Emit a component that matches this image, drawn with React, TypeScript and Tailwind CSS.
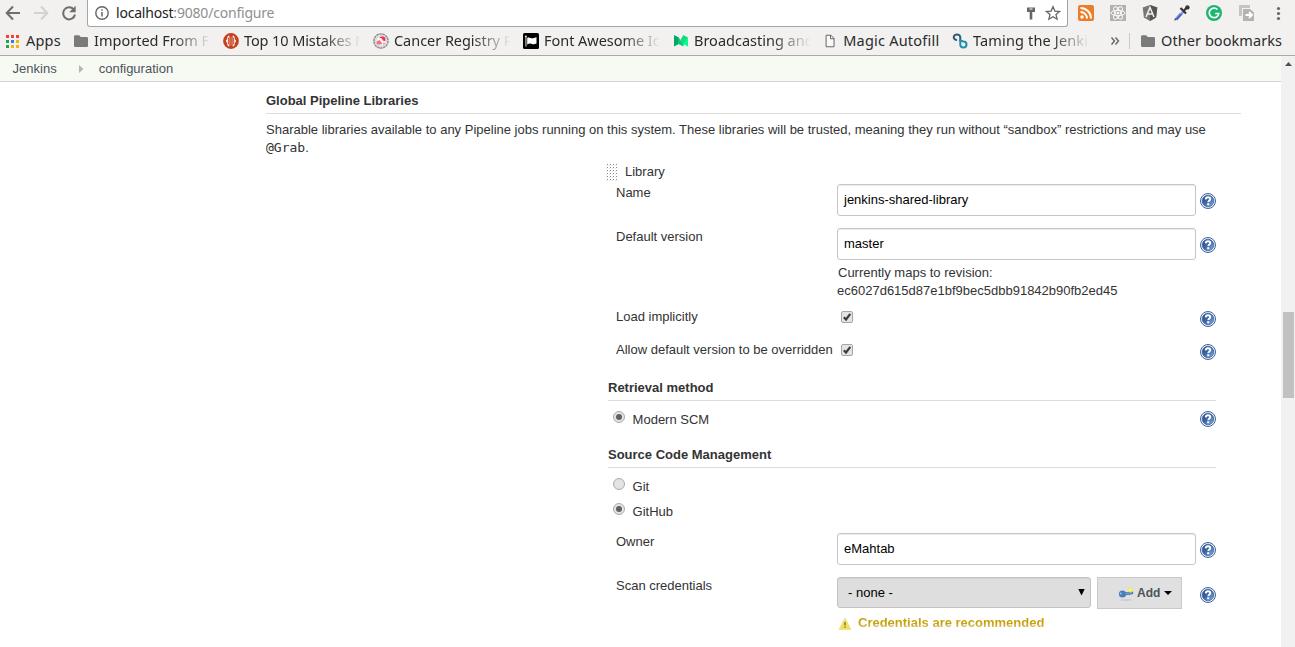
import type { ReactNode } from "react";

function HelpIcon() {
  return (
    <svg width="16" height="16" viewBox="0 0 16 16" className="block shrink-0">
      <defs>
        <linearGradient id="helpFill" x1="0" y1="0" x2="1" y2="1">
          <stop offset="0" stopColor="#1f4a8c" />
          <stop offset="0.45" stopColor="#3a64a2" />
          <stop offset="1" stopColor="#8fb2dc" />
        </linearGradient>
      </defs>
      <circle cx="8" cy="8" r="7.5" fill="#f4f7fb" stroke="#3c639f" strokeWidth="1" />
      <circle cx="8" cy="8" r="5.800" fill="url(#helpFill)" stroke="#34609f" strokeWidth="0.700" />
      <path d="M5.700 6.400C5.800 4.700 6.800 4.200 8 4.200c1.500 0 2.300.7 2.300 1.700 0 1.500-2 1.600-2 3.200" fill="none" stroke="#fff" strokeWidth="1.900" />
      <rect x="7.200" y="10.200" width="2" height="2" fill="#fff" />
    </svg>
  );
}

function Folder() {
  return (
    <svg width="16" height="16" viewBox="0 0 16 16" className="block">
      <path d="M1 3.500a1.200 1.200 0 0 1 1.200-1.200h4l1.500 1.700h6a1.300 1.300 0 0 1 1.300 1.300v7.400a1.300 1.300 0 0 1-1.300 1.300H2.200A1.200 1.200 0 0 1 1 12.800z" fill="#7b7b7b" />
    </svg>
  );
}

function Mistakes() {
  return (
    <svg width="16" height="16" viewBox="0 0 16 16" className="block">
      <circle cx="8" cy="8" r="7.900" fill="#c5401c" />
      <path d="M6.300 2.500C3.600 2.800 4.700 6.500 2.800 8c1.900 1.500.8 5.200 3.500 5.500zM9.700 2.500c2.700.3 1.600 4 3.500 5.500-1.900 1.500-.8 5.200-3.500 5.500z" fill="#fff" />
      <path d="M5.300 4.500v7M10.700 4.500v7" stroke="#c5401c" strokeWidth="1" />
      <path d="M8 3.500v9" stroke="#e5a08c" strokeWidth="0.800" />
    </svg>
  );
}

function Registry() {
  return (
    <svg width="16" height="16" viewBox="0 0 16 16" className="block">
      <circle cx="8" cy="8" r="7" fill="#fafafa" stroke="#909090" strokeWidth="1.600" strokeDasharray="2.600 0.500" />
      <circle cx="8" cy="8" r="5.300" fill="#f5f5f5" stroke="#b9b9b9" strokeWidth="0.700" />
      <path d="M6 4.500L9 3.200l3.300 1.300v3.700L9.800 7.500 9 5.500z" fill="#fa2f50" />
      <path d="M3.500 8.500l3-1.500L8 9l1.500 1.500-2 1H4z" fill="#f96f82" />
      <path d="M10 9.500l2.500.7-2 2z" fill="#b0b0b0" />
    </svg>
  );
}

function FlagTile() {
  return (
    <svg width="16" height="16" viewBox="0 0 16 16" className="block">
      <rect width="16" height="16" rx="1.500" fill="#000" />
      <circle cx="2.900" cy="3.300" r="0.900" fill="#fff" />
      <path d="M2.500 3.500h0.900v10h-0.900z" fill="#fff" />
      <path d="M4.200 4.900c2.500-1.300 3.800.9 6 .4 1.300-.3 2-.8 3.300-1v6.200c-2.500 1.300-3.500.7-5.300.2-1.500-.4-2.700 0-4 .9z" fill="#fff" />
    </svg>
  );
}

function MediumLogo() {
  return (
    <svg width="16" height="16" viewBox="0 0 16 16" className="block">
      <path d="M1 2l4.800 2.500V11L1 13.500z" fill="#00a768" />
      <path d="M5.500 4.300L8 8l2.500 3.800v1.700L5.500 11z" fill="#00c878" />
      <path d="M7.300 7.300L10.300 2 15 4.500 10.500 12z" fill="#12dc80" />
      <path d="M15 4.500v9l-4.700-2.500z" fill="#00ff8c" />
    </svg>
  );
}

function PageIcon() {
  return (
    <svg width="16" height="16" viewBox="0 0 16 16" className="block">
      <path d="M3.500 1.500h5.500l3.500 3.500v9.500h-9z" fill="#f8f8f8" stroke="#555" />
      <path d="M8.500 1.500v4h4" fill="none" stroke="#555" />
    </svg>
  );
}

function LoopLogo() {
  return (
    <svg width="16" height="16" viewBox="0 0 16 16" className="block">
      <path d="M8.300 7.200V4A3.300 2.800 0 1 0 5 6.800" fill="none" stroke="#355a74" strokeWidth="2" transform="translate(0 0.200)" />
      <path d="M8.300 6.500V11.500a3.100 3 0 1 0 3.100-3L7 7.200" fill="none" stroke="#2090b0" strokeWidth="2" />
    </svg>
  );
}

type BookmarkItem = { text: string; icon: ReactNode; cell: string; label: string; fade: boolean };

const fadeMask = "[mask-image:linear-gradient(to_right,black_78px,transparent_117px)]";

const bookmarks: BookmarkItem[] = [
  { text: "Imported From Fi", icon: <Folder />, cell: "w-[150px]", label: "tracking-[0px]", fade: true },
  { text: "Top 10 Mistakes N", icon: <Mistakes />, cell: "w-[150px]", label: "tracking-[-0.1px]", fade: true },
  { text: "Cancer Registry P", icon: <Registry />, cell: "w-[150px]", label: "tracking-[-0.04px]", fade: true },
  { text: "Font Awesome Ic", icon: <FlagTile />, cell: "w-[150px]", label: "tracking-[-0.04px]", fade: true },
  { text: "Broadcasting and", icon: <MediumLogo />, cell: "w-[150px]", label: "tracking-[0px]", fade: true },
  { text: "Magic Autofill", icon: <PageIcon />, cell: "w-[129px]", label: "tracking-[0.22px] pl-px", fade: false },
  { text: "Taming the Jenki", icon: <LoopLogo />, cell: "w-[150px]", label: "tracking-[0.15px]", fade: true },
];

const appDots = ["#f44336", "#f44336", "#f44336", "#2b9e4f", "#2b7de9", "#f2b50f", "#2b9e4f", "#f2b50f", "#f2b50f"];

function Browser() {
  return (
    <header className="h-[56px] border-b border-[#a9a9a9] bg-[#f2f1f0] font-['Noto_Sans',sans-serif] text-[14.5px] text-[#2b2b2b]">
      <div className="flex h-[27px]">
        <svg width="87" height="27" viewBox="0 0 87 27" className="shrink-0" fill="none" strokeWidth="2">
          <path d="M20 13H7M13 6.500L6.700 13l6.300 6.500" stroke="#6e6e6e" />
          <path d="M34 13h13M41 6.500l6.300 6.500-6.300 6.500" stroke="#d2d1d0" />
          <path d="M73.700 9.500A6 6 0 1 0 75 14.500" stroke="#6e6e6e" />
          <path d="M75.700 5.700v6.500h-6.500z" fill="#6e6e6e" />
        </svg>
        <div className="flex h-[27px] w-[981px] items-center rounded-b-[3px] border-x border-b border-[#a5a5a5] bg-white">
          <svg width="14" height="14" viewBox="0 0 14 14" className="ml-[7px] shrink-0">
            <circle cx="7" cy="7" r="6.200" fill="none" stroke="#666" strokeWidth="1.400" />
            <path d="M7 6v4.500M7 3.300v1.500" stroke="#666" strokeWidth="1.500" />
          </svg>
          <div className="ml-[7px] flex-1 whitespace-nowrap text-[14px] leading-[20px] tracking-[-0.2px] text-[#8f8f8f]">
            <span className="text-[#222]">localhost</span>:9080/configure
          </div>
          <svg width="44" height="26" viewBox="0 0 44 26" className="shrink-0">
            <path d="M4 7.500h8v4.500H9.300v7.500H6.700V12H4z" fill="#666" />
            <rect x="6.500" y="8.500" width="3" height="1" fill="#fff" />
            <path d="M30 6.700l1.900 4.400 4.700.4-3.600 3.100 1.100 4.600-4.100-2.500-4.100 2.500 1.100-4.600-3.600-3.100 4.700-.4z" fill="none" stroke="#666" strokeWidth="1.300" />
          </svg>
        </div>
        <svg width="227" height="27" viewBox="1068 0 227 27" className="shrink-0">
          <rect x="1078" y="5" width="16" height="16" rx="2" fill="#ec7c27" />
          <circle cx="1082" cy="17" r="1.700" fill="#fff" />
          <path d="M1080.500 12a6.500 6.500 0 0 1 6.500 6.500M1080.500 8a10.500 10.500 0 0 1 10.500 10.500" fill="none" stroke="#fff" strokeWidth="2" />
          <rect x="1110" y="5" width="16" height="16" fill="#b1b1b1" />
          <g fill="none" stroke="#fff" strokeWidth="0.900">
            <ellipse cx="1118" cy="13" rx="7" ry="2.700" />
            <ellipse cx="1118" cy="13" rx="7" ry="2.700" transform="rotate(60 1118 13)" />
            <ellipse cx="1118" cy="13" rx="7" ry="2.700" transform="rotate(120 1118 13)" />
          </g>
          <circle cx="1118" cy="13" r="1.300" fill="#fff" />
          <path d="M1150 5l7.300 2.600-1.200 9.800-6.100 3.600-6.100-3.600-1.200-9.800z" fill="#777" />
          <path d="M1150 5l7.300 2.600-1.200 9.800-6.100 3.600z" fill="#555" />
          <path d="M1146 17l4-9.500 4 9.500M1147.500 14h5" fill="none" stroke="#f2f1f0" strokeWidth="1.500" />
          <path d="M1176 19.500l7-8" stroke="#7f97d8" strokeWidth="3.200" />
          <path d="M1176.500 19.500l5-5.500" stroke="#3b5fc8" strokeWidth="1.800" />
          <path d="M1179.500 13l3.500-3.700" stroke="#e8edf5" strokeWidth="1.600" />
          <path d="M1174.500 20.300l1.600-2" stroke="#555" strokeWidth="1.300" />
          <path d="M1180.500 8l5.500 5.500M1183.500 11l3.700-3.700" stroke="#3a3533" strokeWidth="2.200" />
          <circle cx="1187.400" cy="7.400" r="2.200" fill="#3a3533" />
          <circle cx="1214" cy="13" r="8" fill="#1eb571" />
          <path d="M1217.500 9.500a4.800 4.800 0 1 0 1.300 4h-3.600" fill="none" stroke="#fff" strokeWidth="1.700" />
          <path d="M1239 5h11v3h-8v8h-3z" fill="#c4c4c4" />
          <path d="M1243 9h7l4 3.500V21h-11z" fill="#b3b3b3" />
          <path d="M1245.500 15h5M1249 12l3 3-3 3" fill="none" stroke="#fff" strokeWidth="1.800" />
          <g fill="#666"><circle cx="1278.500" cy="8.500" r="1.600" /><circle cx="1278.500" cy="13.500" r="1.600" /><circle cx="1278.500" cy="18.500" r="1.600" /></g>
        </svg>
      </div>
      <div className="flex h-[28px] items-center whitespace-nowrap pl-[6px]">
        <div className="flex w-[67px] items-center gap-[7px]">
          <div className="grid grid-cols-3 gap-[2px]">
            {appDots.map((c, i) => (
              <span key={i} className="h-[3px] w-[3px]" style={{ backgroundColor: c }} />
            ))}
          </div>
          <span className="pb-[2px] tracking-[0.2px]">Apps</span>
        </div>
        {bookmarks.map((b) => (
          <div key={b.text} className={`flex shrink-0 items-center gap-[5px] ${b.cell}`}>
            {b.icon}
            <span className={`w-[124px] pb-[2px] ${b.label} ${b.fade ? fadeMask : ""}`}>{b.text}</span>
          </div>
        ))}
        <svg width="27" height="16" viewBox="0 0 27 16" className="shrink-0" fill="none" stroke="#666" strokeWidth="1.400">
          <path d="M9.500 4.500l3 3.500-3 3.500M13.500 4.500l3 3.500-3 3.500" />
        </svg>
        <div className="mr-[10px] h-4 w-px shrink-0 bg-[#c9c9c9]" />
        <Folder />
        <span className="ml-[5px] pb-[2px] tracking-[0.07px]">Other bookmarks</span>
      </div>
    </header>
  );
}

function TextInput({ value }: { value: string }) {
  return (
    <div className="h-[32px] w-[359px] shrink-0 rounded-[3px] border border-[#c6c6c6] pl-[6px] leading-[30px] text-black shadow-[inset_0_1px_1px_rgba(0,0,0,0.08)]">
      {value}
    </div>
  );
}

function Row({ label, height, help, children }: { label: string; height: string; help: string; children: ReactNode }) {
  return (
    <div className={`flex ${height}`}>
      <div className="w-[221px] shrink-0 whitespace-nowrap">{label}</div>
      <div className="w-[363px] shrink-0">{children}</div>
      <div className={help}><HelpIcon /></div>
    </div>
  );
}

function Check() {
  return (
    <svg width="14" height="14" viewBox="0 0 14 14" className="ml-[3px] mt-[2px] block">
      <rect x="1.500" y="1.500" width="11" height="11" rx="1.500" fill="#e4e4e4" stroke="#a6a6a6" />
      <path d="M3.800 7.300l2.200 2.200 4.300-5.700" fill="none" stroke="#3d3d3d" strokeWidth="2.200" />
    </svg>
  );
}

function Radio({ on }: { on: boolean }) {
  return (
    <svg width="12" height="12" viewBox="0 0 12 12" className="block shrink-0">
      <circle cx="6" cy="6" r="5.500" fill="#e3e3e3" stroke="#aaa" />
      {on && <circle cx="6" cy="6" r="3" fill="#606060" />}
    </svg>
  );
}

function Heading({ children }: { children: string }) {
  return <h2 className="h-[27px] w-[608px] border-b border-[#dcdcdc] pt-[5px] font-bold">{children}</h2>;
}

export default function App() {
  return (
    <div className="h-[647px] w-[1295px] overflow-hidden bg-white font-['Liberation_Sans',Arial,sans-serif] text-[13px] leading-[18px] text-[#333]">
      <Browser />
      <div className="flex h-[591px]">
        <div className="w-[1281px]">
          <nav className="flex h-[26px] items-center border-b border-[#d3d5cf] bg-[#f6faf2] pl-[12.6px] text-[#4d545d]">
            <span>Jenkins</span>
            <svg width="5" height="8" viewBox="0 0 5 8" className="ml-[22px] mr-[15px]"><path d="M0 0l4.500 4L0 8z" fill="#b4b7b1" /></svg>
            <span>configuration</span>
          </nav>
          <main className="pl-[266px]">
            <h1 className="h-[32px] w-[975px] border-b border-[#dcdcdc] pt-[10px] font-bold">Global Pipeline Libraries</h1>
            <p className="h-[49px] w-[975px] pt-[7px]">
              Sharable libraries available to any Pipeline jobs running on this system. These libraries will be trusted, meaning they run without “sandbox” restrictions and may use{" "}
              <code className="font-['DejaVu_Sans_Mono',monospace] text-[13px]">@Grab</code>.
            </p>
            <section className="pl-[342px]">
              <div className="-ml-[2px] flex h-[21px]">
                <svg width="12" height="17" viewBox="0 0 12 17" className="mr-[7px] mt-[1px]">
                  {[0, 3, 6, 9, 12, 15].map((y) =>
                    [0, 3, 6, 9].map((x) => (
                      <path key={`${x}-${y}`} d={`M${x} ${y + 1}h2v-1h-1v2h1z`} fill="#888" />
                    ))
                  )}
                </svg>
                <span>Library</span>
              </div>
              <div className="pl-2">
                <Row label="Name" height="h-[44px]" help="pt-[9px]">
                  <TextInput value="jenkins-shared-library" />
                </Row>
                <Row label="Default version" height="h-[80px]" help="pt-[9px]">
                  <TextInput value="master" />
                  <div className="pl-px pt-[4px]">Currently maps to revision:</div>
                  <div>ec6027d615d87e1bf9bec5dbb91842b90fb2ed45</div>
                </Row>
                <Row label="Load implicitly" height="h-[33px]" help="pt-[3px]"><Check /></Row>
                <Row label="Allow default version to be overridden" height="h-[33px]" help="pt-[3px]"><Check /></Row>
              </div>
              <Heading>Retrieval method</Heading>
              <div className="flex h-[40px] pl-[5px] pt-[10px]">
                <Radio on />
                <span className="ml-[7.6px] w-[567.4px]">Modern SCM</span>
                <HelpIcon />
              </div>
              <Heading>Source Code Management</Heading>
              <div className="flex h-[35px] pl-[5px] pt-[10px]">
                <Radio on={false} />
                <span className="ml-[7.6px]">Git</span>
              </div>
              <div className="flex h-[30px] pl-[5px]">
                <Radio on />
                <span className="ml-[7.6px]">GitHub</span>
              </div>
              <div className="pl-2">
                <Row label="Owner" height="h-[44px]" help="pt-[9px]"><TextInput value="eMahtab" /></Row>
                <Row label="Scan credentials" height="h-[70px]" help="pt-[10px]">
                  <div className="flex gap-[6px]">
                    <div className="flex h-[31px] w-[254px] items-center justify-between rounded-[3px] border border-[#c3c3c3] bg-[#dedede] pl-[10px] pr-[5px] text-black shadow-[inset_0_1px_1px_rgba(0,0,0,0.06)]">
                      <span>- none -</span>
                      <svg width="7" height="7" viewBox="0 0 7 7"><path d="M0.300 0h6.400L3.500 6.500z" fill="#000" /></svg>
                    </div>
                    <div className="flex h-[32px] w-[85px] items-center border border-[#c9c9c9] bg-[#e0e0e0] pl-[20px] text-[12px] font-bold text-[#4d545d]">
                      <svg width="16" height="16" viewBox="0 0 16 16" className="mr-[3px]">
                        <ellipse cx="8" cy="15" rx="6" ry="0.700" fill="#c8c8c8" />
                        <circle cx="4.500" cy="9" r="3.600" fill="#4a7dba" />
                        <path d="M6.500 7.300l8-.8.900 1.300-.9 1.700-1.800-.3-.8 1-1.500-.5-3.900.8z" fill="#4a7dba" />
                        <path d="M7.500 8.500l6.500-.8" stroke="#8fb2da" strokeWidth="0.800" />
                        <circle cx="2.800" cy="8.500" r="0.900" fill="#a9c4e3" />
                        <circle cx="12.300" cy="5" r="2.400" fill="#f5ea4d" />
                        <circle cx="12.300" cy="5" r="0.900" fill="#fffbd0" />
                      </svg>
                      <span>Add</span>
                      <svg width="8" height="4" viewBox="0 0 8 4" className="ml-[4px]"><path d="M0 0h8L4 4z" fill="#000" /></svg>
                    </div>
                  </div>
                  <div className="flex pt-[5px]">
                    <svg width="14" height="14" viewBox="0 0 14 14" className="ml-[1px] mr-[6px] mt-[3px]">
                      <path d="M7 1l6 11.500H1z" fill="#f3df5c" stroke="#efe3a0" strokeLinejoin="round" />
                      <path d="M7 5v3.500M7 9.600v1.200" stroke="#776b2a" strokeWidth="1.300" />
                    </svg>
                    <span className="bg-linear-to-b from-[#c4a000] from-50% to-[#ecdc8a] bg-clip-text font-bold text-transparent">
                      Credentials are recommended
                    </span>
                  </div>
                </Row>
              </div>
            </section>
          </main>
        </div>
        <div className="flex w-[14px] flex-col items-center bg-[#f1f1f1] pt-[6px]">
          <svg width="7" height="4" viewBox="0 0 7 4"><path d="M0 4h7L3.500 0z" fill="#505050" /></svg>
          <div className="mt-[246px] h-[86px] w-[11px] bg-[#c1c1c1]" />
        </div>
      </div>
    </div>
  );
}
